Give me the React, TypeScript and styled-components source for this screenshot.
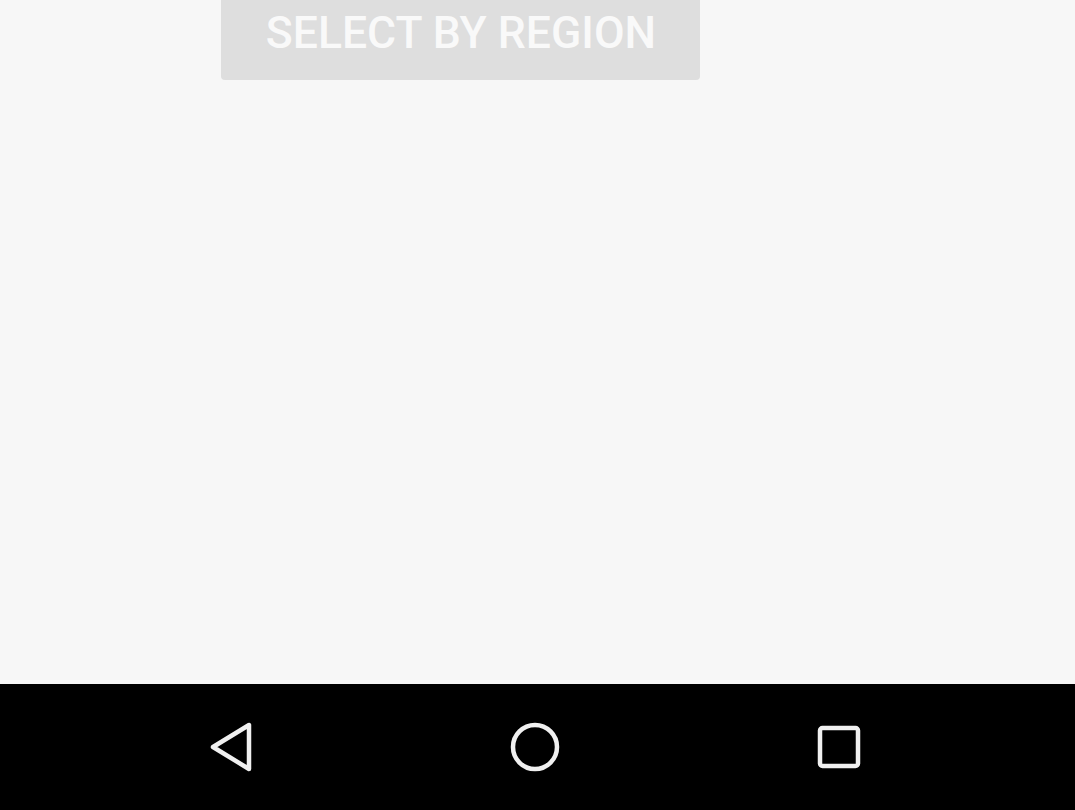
import React from "react";
import styled, { createGlobalStyle } from "styled-components";

const Global = createGlobalStyle`
  html, body { margin: 0; padding: 0; height: 100%; }
  body { background: #f7f7f7; font-family: Roboto, "Noto Sans", sans-serif; overflow: hidden; }
  #root { height: 100%; }
`;

const Screen = styled.div`
  width: 1075px;
  height: 810px;
  display: flex;
  flex-direction: column;
  background: #f7f7f7;
  overflow: hidden;
`;

const Content = styled.main`
  flex: 1;
  display: flex;
  flex-direction: column;
  align-items: flex-start;
  padding-left: 221px;
`;

const RegionButton = styled.button`
  margin-top: -18px;
  width: 479px;
  height: 98px;
  border: none;
  border-radius: 4px;
  background: #dedede;
  color: #f9f9f9;
  font-family: Roboto, "Noto Sans", sans-serif;
  font-weight: 500;
  font-size: 44.5px;
  text-transform: uppercase;
  padding: 4px 0 0 1px;
  display: flex;
  align-items: center;
  justify-content: center;
  cursor: default;
`;

const NavBar = styled.nav`
  height: 126px;
  background: #000;
  display: grid;
  grid-template-columns: repeat(3, 304px);
  align-items: center;
  padding-left: 79px;
`;

const NavSlot = styled.div`
  display: flex;
  justify-content: center;
  align-items: center;
`;

const Back = () => (
  <svg width="44" height="50" viewBox="0 0 44 50" fill="none">
    <path d="M40 3 L40 47 L4 25 Z" stroke="#f0f0f0" strokeWidth="4.5" strokeLinejoin="round" />
  </svg>
);
const Home = () => (
  <svg width="52" height="52" viewBox="0 0 52 52" fill="none">
    <circle cx="26" cy="26" r="22" stroke="#f0f0f0" strokeWidth="4.5" />
  </svg>
);
const Recents = () => (
  <svg width="46" height="46" viewBox="0 0 46 46" fill="none">
    <rect x="4" y="4" width="38" height="38" rx="2.5" stroke="#f0f0f0" strokeWidth="4.5" />
  </svg>
);

export default function App() {
  return (
    <Screen>
      <Global />
      <Content>
        <RegionButton>Select by region</RegionButton>
      </Content>
      <NavBar>
        <NavSlot><Back /></NavSlot>
        <NavSlot><Home /></NavSlot>
        <NavSlot><Recents /></NavSlot>
      </NavBar>
    </Screen>
  );
}
